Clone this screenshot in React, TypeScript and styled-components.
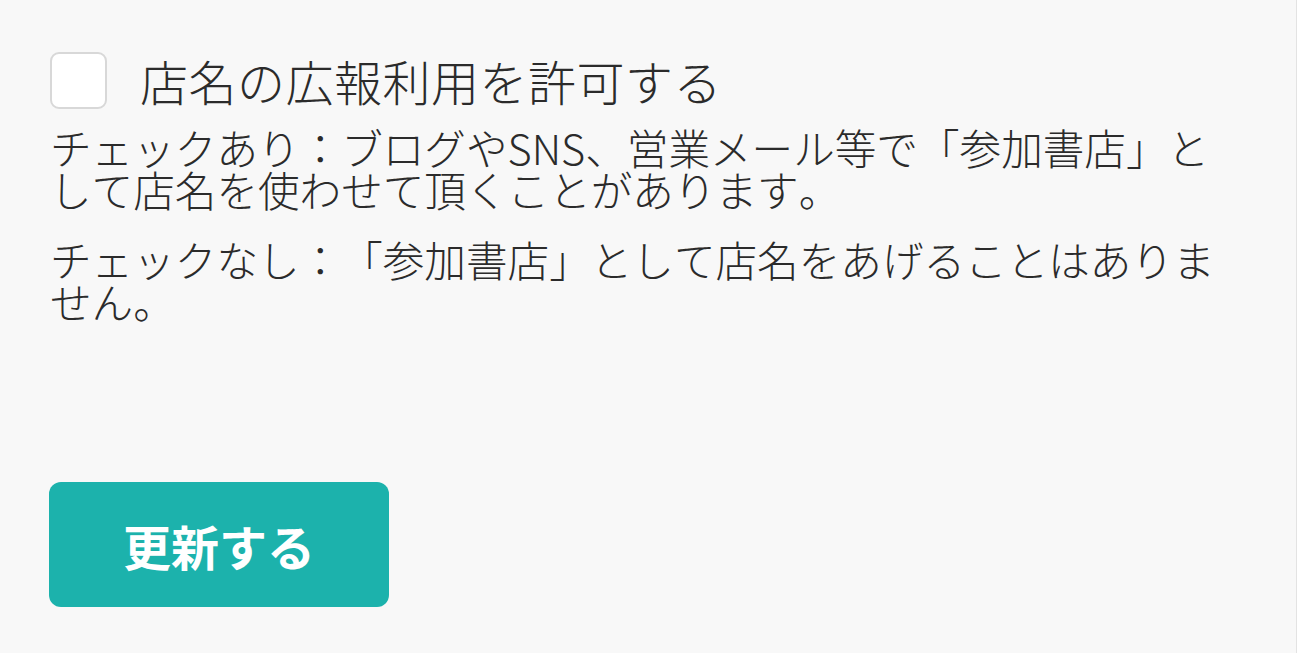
import React, { useState } from 'react';
import styled, { createGlobalStyle } from 'styled-components';

const GlobalStyle = createGlobalStyle`
  html, body {
    margin: 0;
    padding: 0;
    background: #ffffff;
  }
  body {
    font-family: 'Noto Sans CJK JP', 'Noto Sans', sans-serif;
    color: #2b2b2b;
  }
`;

const Panel = styled.div`
  box-sizing: border-box;
  width: 1297px;
  min-height: 653px;
  padding: 52px 50px 0 49px;
  background: #f8f8f8;
  border-right: 1px solid #e3e3e3;
`;

const CheckRow = styled.label`
  display: flex;
  align-items: center;
  gap: 33px;
  padding-left: 1px;
  cursor: pointer;
`;

const Box = styled.span<{ $checked: boolean }>`
  box-sizing: border-box;
  flex-shrink: 0;
  width: 57px;
  height: 57px;
  border: 2px solid #d8d8d8;
  border-radius: 9px;
  background: ${({ $checked }) => ($checked ? '#1cb2ac' : '#ffffff')};
`;

const Title = styled.span`
  font-size: 48px;
  font-weight: 300;
  line-height: 57px;
  letter-spacing: 0.5px;
`;

const Note = styled.p<{ $gap: number }>`
  margin: ${({ $gap }) => $gap}px 0 0 1px;
  font-size: 41.6px;
  font-weight: 300;
  line-height: 42px;
  text-spacing-trim: space-all;
  font-kerning: none;
`;

const SubmitButton = styled.button`
  display: block;
  width: 340px;
  height: 125px;
  margin-top: 160px;
  border: none;
  border-radius: 12px;
  background: #1cb2ac;
  color: #ffffff;
  font-family: 'Noto Sans CJK JP', sans-serif;
  font-size: 48px;
  font-weight: 700;
  cursor: pointer;
`;

export default function App() {
  const [checked, setChecked] = useState(false);

  return (
    <>
      <GlobalStyle />
      <Panel>
        <CheckRow onClick={() => setChecked(!checked)}>
          <Box $checked={checked} />
          <Title>店名の広報利用を許可する</Title>
        </CheckRow>
        <Note $gap={17}>
          チェックあり：ブログやSNS、営業メール等で「参加書店」として店名を使わせて頂くことがあります。
        </Note>
        <Note $gap={28}>
          チェックなし：「参加書店」として店名をあげることはありません。
        </Note>
        <SubmitButton type="button">更新する</SubmitButton>
      </Panel>
    </>
  );
}
